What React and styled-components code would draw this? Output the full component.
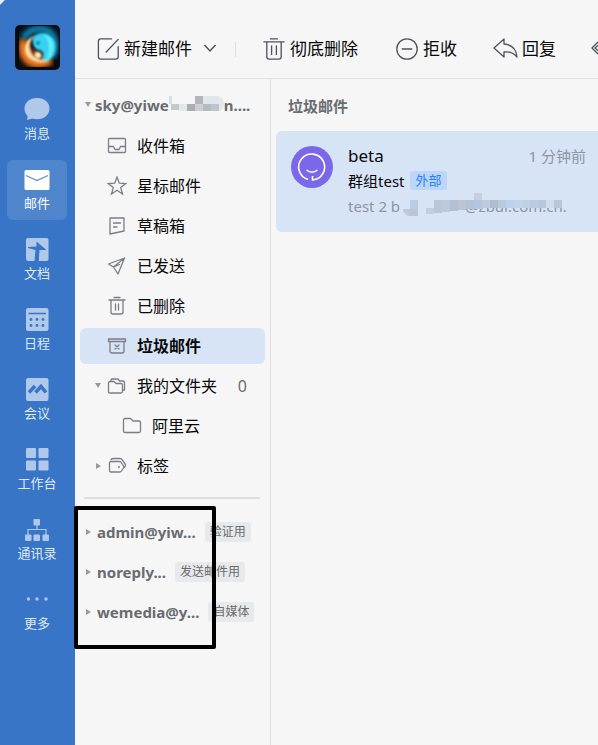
import React from 'react';
import styled, { createGlobalStyle } from 'styled-components';

const Global = createGlobalStyle`
  * { box-sizing: border-box; }
  body { margin: 0; background: #f6f6f6; font-family: "Noto Sans", "Noto Sans CJK SC", sans-serif; color: #080808; }
  button { font: inherit; color: inherit; background: none; border: 0; padding: 0; margin: 0; text-align: left; cursor: pointer; }
  svg { display: block; flex: none; }
  h1, h2, p, ul { margin: 0; padding: 0; font-weight: inherit; list-style: none; }
`;

const Page = styled.div`
  display: flex;
  min-height: 100vh;
  overflow: hidden;
`;
const Rail = styled.nav`
  flex: none;
  width: 75px;
  background: linear-gradient(135deg, #e4ebf5 0 3px, #3875c6 4px);
  display: flex;
  flex-direction: column;
  align-items: center;
  gap: 10px;
  padding: 25px 1px 0 0;
`;
const Profile = styled.button`
  width: 44px;
  margin-bottom: 10px;
`;
const RailButton = styled.button`
  width: 60px;
  height: 60px;
  border-radius: 6px;
  display: flex;
  flex-direction: column;
  align-items: center;
  gap: 1px;
  padding-top: 7px;
  font-size: 13px;
  line-height: 20px;
  color: ${p => (p.$active ? '#fff' : '#dfe9f6')};
  background: ${p => (p.$active ? '#4f85cd' : 'transparent')};
`;
const Workspace = styled.div`
  flex: 1;
  min-width: 0;
  display: flex;
  flex-direction: column;
`;
const Toolbar = styled.header`
  height: 79px;
  border-bottom: 1px solid #e2e2e2;
  display: flex;
  align-items: center;
  padding: 20px 0 0 21px;
  overflow: hidden;
`;
const ToolButton = styled.button`
  display: flex;
  align-items: center;
  gap: 4px;
  flex: none;
  margin-right: ${p => p.$after}px;
  font-size: 17px;
  line-height: 24px;
`;
const Divider = styled.span`
  width: 1px;
  height: 15px;
  background: #dfdfdf;
  margin-right: 26px;
  flex: none;
`;
const Columns = styled.div`
  flex: 1;
  display: flex;
`;
const Sidebar = styled.aside`
  flex: none;
  width: 196px;
  border-right: 1px solid #dedede;
  padding: 9px 5px 0;
`;
const AccountRow = styled.button`
  display: flex;
  align-items: center;
  width: 100%;
  height: ${p => (p.$main ? 34 : 40)}px;
  margin-bottom: ${p => (p.$main ? 6 : 0)}px;
  padding-left: 4px;
  font-size: 15px;
  color: #686b70;
  white-space: nowrap;
`;
const Address = styled.span`
  font-weight: 700;
  margin-left: ${p => p.$indent || 0}px;
`;
const Tag = styled.span`
  height: 20px;
  line-height: 20px;
  margin-left: 9px;
  padding: 0 5px;
  border-radius: 3px;
  background: #e7e9eb;
  font-size: 12px;
`;
const FolderRow = styled.button`
  display: flex;
  align-items: center;
  width: 100%;
  height: 36px;
  margin-bottom: 4px;
  padding-left: ${p => (p.$nested ? 29 : 14)}px;
  padding-right: 18px;
  border-radius: 6px;
  background: ${p => (p.$active ? '#d7e4f6' : 'transparent')};
  font-size: 16px;
  font-weight: ${p => (p.$active ? 700 : 400)};
  line-height: 24px;
`;
const Caret = styled.span`
  width: 13px;
  flex: none;
  display: flex;
`;
const FolderName = styled.span`
  flex: 1;
  margin-left: 10px;
`;
const Count = styled.span`
  color: #686b70;
`;
const Rule = styled.hr`
  border: 0;
  height: 2px;
  margin: 13px 5px 13px 4px;
  background: #dcdddd;
`;
const Accounts = styled.section`
  position: relative;
`;
const Frame = styled.div`
  position: absolute;
  left: -6px;
  top: -6px;
  width: 142px;
  height: 143px;
  border: 4px solid #000;
  border-radius: 2px;
  pointer-events: none;
`;
const MailPane = styled.main`
  flex: 1;
  min-width: 0;
  padding: 16px 0 0 5px;
`;
const PaneTitle = styled.h1`
  padding-left: 12px;
  font-size: 15px;
  line-height: 22px;
  font-weight: 700;
  color: #686b70;
`;
const MailCard = styled.article`
  margin-top: 14px;
  min-height: 101px;
  padding: 12px 12px 0 15px;
  border-radius: 6px 0 0 6px;
  background: #d7e4f6;
  display: flex;
  gap: 15px;
`;
const Avatar = styled.svg`
  margin-top: 3px;
`;
const MailText = styled.div`
  flex: 1;
  min-width: 0;
`;
const Line = styled.div`
  position: relative;
  display: flex;
  align-items: center;
  height: 25px;
  font-size: ${p => p.$size}px;
  color: ${p => (p.$muted ? '#8b95a3' : '#080808')};
  white-space: nowrap;
`;
const Time = styled.time`
  margin-left: auto;
  font-size: 15px;
  color: #8b95a3;
`;
const External = styled.span`
  height: 19px;
  line-height: 19px;
  margin-left: 6px;
  padding: 0 5px;
  border-radius: 3px;
  background: #bcd6f8;
  color: #2383f5;
  font-size: 13px;
`;
const Domain = styled.span`
  margin-left: 65px;
`;
const Cover = styled.svg`
  position: absolute;
  left: 54px;
  top: 0;
`;

const Icon = ({ size = 20, children, color = '#7b7e84', weight = 1.3 }) => (
  <svg width={size} height={size} viewBox="0 0 20 20" fill="none" stroke={color} strokeWidth={weight} strokeLinejoin="round" strokeLinecap="round" aria-hidden="true">{children}</svg>
);

const BigTrash = () => <path d="M7 1.500h6M1.500 4h17M4 4v12.500q0 2 2 2h8q2 0 2-2V4M8 7.500v7M12 7.500v7" />;
const folderIcons = {
  inbox: <><rect x="1.500" y="2.500" width="17" height="14" rx="1" /><path d="M2 10.500h4.500l1.500 3h4l1.500-3H18" /></>,
  star: <path d="m10 1 2.300 6.200 6.600.3-5.200 4.100 1.800 6.400-5.500-3.700L4.500 18l1.800-6.400L1.100 7.500l6.600-.3Z" strokeLinejoin="miter" />,
  draft: <path d="M3 2h14v13L3 18ZM6.500 7h7M6.500 11h3.500" />,
  sent: <path d="M17.500 2 1.500 8l5 3 4.500 7ZM6.500 11l11-9M6.500 11l6-2.500" />,
  trash: <path d="M7 1.500h6M2 4h16M4 4v12q0 2 2 2h8q2 0 2-2V4M8.500 8v6M11.500 8v6" />,
  junk: <path d="M1.500 3h17v2.500h-17ZM3 5.500V15q0 2 2 2h10q2 0 2-2V5.500M8 9l4 4m0-4-4 4" />,
  folders: <><path d="M4 5V4q0-1 1-1h6l1.500 2H16q1.500 0 1.500 1.500V14h-2" /><path d="M1.500 7q0-1.500 1.500-1.500h4l2 2h5q1.500 0 1.500 1.500v6.500q0 1.500-1.500 1.500H3q-1.500 0-1.500-1.500Z" /></>,
  folder: <path d="M1.500 4q0-1.500 1.500-1.500h5.500L11 5h6q1.500 0 1.500 1.500V15q0 1.500-1.500 1.500H3q-1.500 0-1.500-1.500Z" />,
  tags: <><path d="M2.500 7q0-1.500 1.500-1.500h8.500q1 0 2 1.500l2 3q.8 1 0 2l-2 3q-.7 1-2 1H4q-1.500 0-1.500-1.500Z" /><path d="M4 3.500q1-1 2.500-1H13q1.300 0 2.200 1.300l3 4.200q.8 1 0 2.200l-.8 1.300" /><circle cx="12" cy="11" r="1" fill="#7b7e84" stroke="none" /></>,
};

const folders = [
  { icon: 'inbox', name: '收件箱' },
  { icon: 'star', name: '星标邮件' },
  { icon: 'draft', name: '草稿箱' },
  { icon: 'sent', name: '已发送' },
  { icon: 'trash', name: '已删除' },
  { icon: 'junk', name: '垃圾邮件', active: true },
  { icon: 'folders', name: '我的文件夹', caret: 'down', count: '0' },
  { icon: 'folder', name: '阿里云', nested: true },
  { icon: 'tags', name: '标签', caret: 'right' },
];

const accounts = [
  ['admin@yiw...', '验证用'],
  ['noreply...', '发送邮件用'],
  ['wemedia@y...', '自媒体'],
];

const Triangle = ({ dir }) => (
  <svg width="8" height="8" viewBox="0 0 8 8" fill="#96999e" aria-hidden="true"><path d={dir === 'down' ? 'M1 1h6L4 6Z' : 'M2 1v6l5-3Z'} /></svg>
);

const Blocks = ({ cells }) => cells.map(([x, y, w, h, fill]) => <rect key={`${x}-${y}`} x={x} y={y} width={w} height={h} fill={fill} />);

const addressCells = [
  [0, 0, 3, 8, '#dcdee1'], [2, 8, 8, 6, '#c9c8c8'], [10, 8, 8, 6, '#e2e7ec'], [18, 8, 8, 7, '#aaadb1'],
  [26, 0, 8, 8, '#b4b5bb'], [26, 8, 8, 7, '#d1ced2'], [34, 8, 8, 7, '#b7babf'], [42, 0, 8, 8, '#e0e6ea'], [42, 8, 8, 7, '#bec4cb'],
];
const previewCells = [
  [8, 7, 8, 9, '#bacce3'], [8, 16, 8, 7, '#bac5d5'], [24, 15, 8, 6, '#c0cee1'], [32, 7, 8, 13, '#bac7d9'],
  [40, 7, 8, 12, '#bdcadc'], [48, 7, 8, 11, '#b3c0d1'], [56, 7, 8, 10, '#bcc5d3'], [64, 7, 8, 9, '#b4c3d8'],
  [72, 0, 8, 7, '#c4cfdf'], [72, 7, 8, 9, '#b4c5dc'], [80, 7, 8, 8, '#becbdd'], [88, 7, 8, 8, '#afbdd0'],
  [96, 7, 8, 8, '#bbc9dc'], [104, 7, 8, 8, '#bed0eb'], [112, 7, 8, 8, '#c3d3ea'], [120, 7, 8, 8, '#c0cfe4'],
  [128, 7, 8, 8, '#bdcbe0'], [136, 7, 8, 8, '#b8c6d9'], [144, 7, 8, 8, '#cfdcee'], [152, 7, 8, 8, '#b8c6da'],
];

const A = '#b0c9ea';
const B = '#3875c6';
const railItems = [
  ['消息', <path d="M13 1C5.500 1 .5 5.800.5 11.500c0 3.500 1 5.300 3 7.200L3.200 23l5-1.500c1.400.5 3 .8 4.800.8 7.500 0 12.500-4.800 12.500-10.800S20.500 1 13 1Z" fill={A} />],
  ['邮件', <><rect x=".5" y="3" width="25" height="20" rx="1.500" fill="#fff" /><path d="m2 8.500 11 5 11-5" fill="none" stroke="#5d8fd2" strokeWidth="1.200" /></>],
  ['文档', <><rect x="2" y="1" width="22.500" height="23" rx="2" fill={A} /><path d="M12.500 4.500 22.500 13h-7l-.7 11h-4.300l1-11L4 11v-1l8.500-.5Z" fill={B} /></>],
  ['日程', <><rect x="2" y="1" width="22.500" height="23" rx="2" fill={A} /><path d="M4.500 6.500H22" stroke={B} strokeWidth="1.500" />{[7, 13, 19].map(x => [12.5, 18.5].map(y => <circle key={`${x}-${y}`} cx={x} cy={y} r="1.400" fill={B} />))}</>],
  ['会议', <><rect x="2" y="1" width="22.500" height="23" rx="2" fill={A} /><path d="m5 15.500 6-6.500M11.500 15.500l5.500-6 5 6" fill="none" stroke={B} strokeWidth="3.500" /></>],
  ['工作台', <>{[2, 14.5].map(x => [1, 13.5].map(y => <rect key={`${x}-${y}`} x={x} y={y} width="10" height="10" rx="1" fill={A} />))}</>],
  ['通讯录', <><path d="M13 7v5M4 18v-5.500h18V18" fill="none" stroke={A} strokeWidth="1.200" />{[[9.5, 2], [1, 17.5], [9.5, 17.5], [18.5, 17.5]].map(([x, y]) => <rect key={`${x}-${y}`} x={x} y={y} width="6.500" height="6.500" rx="1" fill={A} />)}</>],
  ['更多', <>{[4.5, 13, 22].map(x => <circle key={x} cx={x} cy="12" r="1.700" fill={A} />)}</>],
];

const YinYang = () => (
  <svg width="45" height="45" viewBox="0 0 45 45" role="img" aria-label="头像">
    <defs>
      <clipPath id="card"><rect width="45" height="45" rx="5" /></clipPath>
      <filter id="glow"><feGaussianBlur stdDeviation="2.500" /></filter>
      <filter id="edge"><feGaussianBlur stdDeviation=".9" /></filter>
    </defs>
    <g clipPath="url(#card)">
      <rect width="45" height="45" fill="#0a0b0f" />
      <path d="M8 14Q14 3 26 4t14 14q1 9-4 14" fill="none" stroke="#0784b4" strokeWidth="7" filter="url(#glow)" />
      <path d="M9 15Q5 28 14 36q9 6 22-1" fill="none" stroke="#ff7d1c" strokeWidth="8" filter="url(#glow)" />
      <g filter="url(#edge)">
        <path d="M19 11c7-6 18-3 21 6 2 9-1 16-8 20-3 1-5-1-4-5 1-3 0-6-4-7-5-1-8-7-5-14Z" fill="#35d2f2" />
        <path d="M27 9c9 1 13 9 11 16-1 5-3 9-7 11 3-6 4-15 2-20-1-3-3-5-6-7Z" fill="#5ff0fa" />
        <path d="M19 12c-5 5-5 11 0 13 6 2 9 3 8 8-1 4-5 4-9 2-9-5-9-17 1-23Z" fill="#8f3519" />
        <path d="M19 11C8 15 7 29 15 34c5 4 13 5 18 1-7 1-14-1-17-7-3-5-2-12 3-17Z" fill="#ffe0a0" />
        <circle cx="23" cy="18" r="1.800" fill="#075e85" />
        <circle cx="23" cy="30" r="3" fill="#ffedb4" />
      </g>
    </g>
  </svg>
);

export default function App() {
  return (
    <>
      <Global />
      <Page>
        <Rail>
          <Profile><YinYang /></Profile>
          {railItems.map(([label, art]) => (
            <RailButton key={label} $active={label === '邮件'}>
              <svg width="26" height="25" viewBox="0 0 26 25" aria-hidden="true">{art}</svg>
              {label}
            </RailButton>
          ))}
        </Rail>
        <Workspace>
          <Toolbar>
            <ToolButton $after={11}>
              <Icon size={24} color="#50535a" weight={1.1}><path d="M13 1.500H4q-2 0-2 2v13q0 2 2 2h12.500q2 0 2-2V8M8.500 12.500 18.500 2" /></Icon>
              新建邮件
              <svg width="28" height="20" viewBox="0 0 28 20" fill="none" stroke="#50535a" strokeWidth="1.500" aria-hidden="true"><path d="m8.500 6 5.500 6 5.500-6" /></svg>
            </ToolButton>
            <Divider />
            <ToolButton $after={37}><Icon size={24} color="#50535a" weight={1.1}><BigTrash /></Icon>彻底删除</ToolButton>
            <ToolButton $after={36}><Icon size={24} color="#50535a" weight={1.1}><circle cx="10" cy="10" r="8.500" /><path d="M6 10h8" /></Icon>拒收</ToolButton>
            <ToolButton $after={34}>
              <svg width="25" height="24" viewBox="0 0 25 24" fill="none" stroke="#50535a" strokeWidth="1.300" strokeLinejoin="round" aria-hidden="true"><path d="M11 2 1 11l10 9v-5q8-1 13 5Q23 8 11 7Z" /></svg>
              回复
            </ToolButton>
            <ToolButton $after={0} aria-label="回复全部">
              <svg width="28" height="24" viewBox="0 0 28 24" fill="none" stroke="#50535a" strokeWidth="1.300" strokeLinejoin="round" aria-hidden="true"><path d="M8 5 2 11l6 6M15 2 5 11l10 9v-5q8-1 12 5Q26 8 15 7Z" /></svg>
            </ToolButton>
          </Toolbar>
          <Columns>
            <Sidebar>
              <AccountRow $main>
                <Triangle dir="down" />
                <Address $indent={3}>sky@yiwe</Address>
                <svg width="55" height="18" viewBox="0 0 55 18" aria-hidden="true">
                  <path d="M26 0h20q9 0 9 8t-9 7H10V8h16Z" fill="#e4e7ea" />
                  <Blocks cells={addressCells} />
                </svg>
                <Address>n....</Address>
              </AccountRow>
              {folders.map(f => (
                <FolderRow key={f.name} $active={f.active} $nested={f.nested}>
                  <Caret>{f.caret && <Triangle dir={f.caret} />}</Caret>
                  <Icon>{folderIcons[f.icon]}</Icon>
                  <FolderName>{f.name}</FolderName>
                  {f.count && <Count>{f.count}</Count>}
                </FolderRow>
              ))}
              <Rule />
              <Accounts>
                {accounts.map(([address, tag]) => (
                  <AccountRow key={address}>
                    <Triangle dir="right" /><Address $indent={5}>{address}</Address><Tag>{tag}</Tag>
                  </AccountRow>
                ))}
                <Frame />
              </Accounts>
            </Sidebar>
            <MailPane>
              <PaneTitle>垃圾邮件</PaneTitle>
              <MailCard>
                <Avatar width="42" height="42" viewBox="0 0 42 42" fill="none" stroke="#fff" strokeWidth="1.600" aria-hidden="true">
                  <circle cx="21" cy="21" r="21" fill="#7b68e9" stroke="none" />
                  <path d="M17 33.500a13 13 0 1 1 4.500.5v-4M15.500 24q5.500 4.500 11 0" />
                </Avatar>
                <MailText>
                  <Line $size={17}>beta<Time>1 分钟前</Time></Line>
                  <Line $size={15}>群组test<External>外部</External></Line>
                  <Line $size={15} $muted>
                    test 2 b<Domain>@zbui.com.cn.</Domain>
                    <Cover width="168" height="25" viewBox="0 0 168 25" aria-hidden="true">
                      <path d="M0 0h168v15H0Z" fill="#d7e4f6" />
                      <path d="M1 16h7v7q-6 0-7-7Z" fill="#bdc8d8" />
                      <Blocks cells={previewCells} />
                    </Cover>
                  </Line>
                </MailText>
              </MailCard>
            </MailPane>
          </Columns>
        </Workspace>
      </Page>
    </>
  );
}
